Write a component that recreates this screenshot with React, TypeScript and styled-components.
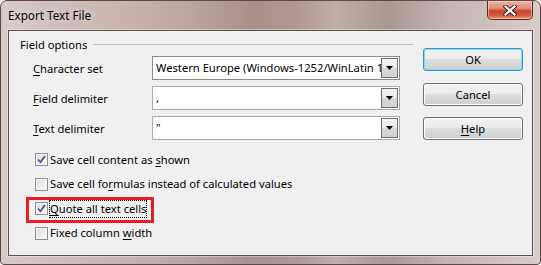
import React from "react";
import styled, { createGlobalStyle } from "styled-components";

const uiFont = `"Noto Sans", "Open Sans", "Liberation Sans", sans-serif`;

const GlobalStyle = createGlobalStyle`
  html, body {
    margin: 0;
    padding: 0;
    background: #ffffff;
  }
  body {
    font-family: ${uiFont};
  }
`;

const Window = styled.div`
  width: 541px;
  height: 265px;
  box-sizing: border-box;
  display: flex;
  flex-direction: column;
  border: 1px solid #5a4a47;
  border-radius: 7px 7px 4px 4px;
  overflow: hidden;
  background: linear-gradient(
    90deg,
    #d8cbc7 0%,
    #cfbfbb 10%,
    #cbb6b1 20%,
    #bba5a0 35%,
    #a8908b 47%,
    #b09994 55%,
    #c1ada8 62%,
    #ab9792 72%,
    #c4b2ae 82%,
    #d9cdc9 100%
  );
  font-family: ${uiFont};
  font-size: 11.2px;
  color: #000;
`;

const TitleBar = styled.div`
  height: 29px;
  flex: none;
  display: flex;
  justify-content: space-between;
  align-items: flex-start;
`;

const Title = styled.div`
  padding: 6px 0 0 7px;
  font-size: 11.7px;
  color: #000;
  text-shadow: 0 0 6px rgba(255, 255, 255, 0.8);
`;

const CloseButton = styled.div`
  width: 46px;
  height: 19px;
  margin-right: 7px;
  box-sizing: border-box;
  border: 1px solid #5a2c24;
  border-top: none;
  border-radius: 0 0 5px 5px;
  background: linear-gradient(
    180deg,
    #eeb3a2 0%,
    #e08d76 40%,
    #c9472c 55%,
    #d4593a 80%,
    #e9977a 100%
  );
  box-shadow: inset 0 0 0 1px rgba(255, 225, 215, 0.5);
  display: flex;
  align-items: center;
  justify-content: center;
`;

const Client = styled.div`
  flex: 1;
  margin: 0 7px 8px 7px;
  border: 1px solid #5e5250;
  background: #f0f0f0;
  display: flex;
  padding: 5px 9px 0 11px;
  box-shadow: 0 0 0 1px rgba(255, 255, 255, 0.35);
`;

const OptionsColumn = styled.div`
  width: 393px;
  display: flex;
  flex-direction: column;
`;

const GroupHeader = styled.div`
  height: 16px;
  display: flex;
  align-items: center;
  gap: 6px;
`;

const GroupLine = styled.div`
  flex: 1;
  height: 1px;
  background: #c2c2c2;
  margin-top: 1px;
`;

const FieldList = styled.div`
  display: flex;
  flex-direction: column;
  gap: 6px;
  margin-top: 4px;
  padding-left: 13px;
`;

const FieldRow = styled.div`
  display: flex;
  align-items: center;
  height: 24px;
`;

const FieldLabel = styled.div`
  width: 119px;
  flex: none;
`;

const Combo = styled.div<{ $dark?: boolean }>`
  width: 248px;
  height: 24px;
  box-sizing: border-box;
  border: 1px solid ${(p) => (p.$dark ? "#8a8a8a" : "#a9a9a9")};
  background: #fff;
  display: flex;
  align-items: stretch;
  padding: 1px;
`;

const ComboText = styled.div`
  flex: 1;
  min-width: 0;
  overflow: hidden;
  white-space: nowrap;
  padding-left: 2px;
  line-height: 20px;
`;

const ComboButton = styled.div`
  width: 17px;
  flex: none;
  box-sizing: border-box;
  border: 1px solid #6f6f6f;
  background: linear-gradient(180deg, #f4f4f4 0%, #e9e9e9 50%, #d9d9d9 51%, #d0d0d0 100%);
  display: flex;
  align-items: center;
  justify-content: center;
`;

const CheckList = styled.div`
  display: flex;
  flex-direction: column;
  margin-top: 7.5px;
`;

const CheckRow = styled.div`
  position: relative;
  height: 24.5px;
  display: flex;
  align-items: center;
  gap: 1px;
  padding-left: 15px;
`;

const Box = styled.div`
  width: 13px;
  height: 13px;
  box-sizing: border-box;
  border: 1px solid #8f8f8f;
  background: linear-gradient(135deg, #dcdcdc 0%, #f0f0f0 60%, #fbfbfb 100%);
  box-shadow: inset 0 0 0 1px #f4f4f4;
  display: flex;
  align-items: center;
  justify-content: center;
`;

const CheckLabel = styled.span<{ $focus?: boolean }>`
  border: 1px dotted ${(p) => (p.$focus ? "#000" : "transparent")};
  padding: 0;
  line-height: 16px;
  white-space: nowrap;
`;

const Highlight = styled.div`
  position: absolute;
  left: 6px;
  top: 0;
  width: 128px;
  height: 26px;
  box-sizing: border-box;
  border: 3px solid #ec1c24;
  pointer-events: none;
`;

const ButtonColumn = styled.div`
  width: 100px;
  margin-left: 10px;
  padding-top: 12px;
  display: flex;
  flex-direction: column;
  gap: 11.5px;
`;

const PushButton = styled.div<{ $default?: boolean }>`
  height: 23px;
  box-sizing: border-box;
  border: 1px solid ${(p) => (p.$default ? "#3c8fd0" : "#707070")};
  border-radius: 3px;
  background: linear-gradient(180deg, #f2f2f2 0%, #ebebeb 49%, #dddddd 50%, #cfcfcf 100%);
  box-shadow: inset 0 0 0 1px ${(p) => (p.$default ? "#7fdcf8" : "#fcfcfc")};
  display: flex;
  align-items: center;
  justify-content: center;
`;

const U = styled.span`
  text-decoration: underline;
  text-underline-offset: 2px;
`;

const Arrow = () => (
  <svg width="7" height="4" viewBox="0 0 7 4">
    <path d="M0 0h7L3.5 4z" fill="#000" />
  </svg>
);

const Tick = () => (
  <svg width="9" height="9" viewBox="0 0 9 9">
    <path d="M1 4.5L3.4 7.2L8 1" fill="none" stroke="#3c4f8f" strokeWidth="1.7" />
  </svg>
);

const CloseGlyph = () => (
  <svg width="14" height="11" viewBox="0 0 14 11">
    <path d="M2.5 1.5L11.5 9.5M11.5 1.5L2.5 9.5" stroke="#3a2420" strokeWidth="4.2" strokeLinecap="square" />
    <path d="M2.5 1.5L11.5 9.5M11.5 1.5L2.5 9.5" stroke="#ffffff" strokeWidth="2.2" strokeLinecap="square" />
  </svg>
);

const fields: { label: React.ReactNode; value: string; dark?: boolean }[] = [
  { label: <><U>C</U>haracter set</>, value: "Western Europe (Windows-1252/WinLatin 1)", dark: true },
  { label: <><U>F</U>ield delimiter</>, value: "," },
  { label: <><U>T</U>ext delimiter</>, value: '"' },
];

const checks: { label: React.ReactNode; checked: boolean; focus?: boolean }[] = [
  { label: <>Save cell content as <U>s</U>hown</>, checked: true },
  { label: <>Save cell fo<U>r</U>mulas instead of calculated values</>, checked: false },
  { label: <><U>Q</U>uote all text cells</>, checked: true, focus: true },
  { label: <>Fixed column <U>w</U>idth</>, checked: false },
];

export default function App() {
  return (
    <>
      <GlobalStyle />
      <Window>
        <TitleBar>
          <Title>Export Text File</Title>
          <CloseButton>
            <CloseGlyph />
          </CloseButton>
        </TitleBar>
        <Client>
          <OptionsColumn>
            <GroupHeader>
              <span>Field options</span>
              <GroupLine />
            </GroupHeader>
            <FieldList>
              {fields.map((f, i) => (
                <FieldRow key={i}>
                  <FieldLabel>{f.label}</FieldLabel>
                  <Combo $dark={f.dark}>
                    <ComboText>{f.value}</ComboText>
                    <ComboButton>
                      <Arrow />
                    </ComboButton>
                  </Combo>
                </FieldRow>
              ))}
            </FieldList>
            <CheckList>
              {checks.map((c, i) => (
                <CheckRow key={i}>
                  <Box>{c.checked && <Tick />}</Box>
                  <CheckLabel $focus={c.focus}>{c.label}</CheckLabel>
                  {c.focus && <Highlight />}
                </CheckRow>
              ))}
            </CheckList>
          </OptionsColumn>
          <ButtonColumn>
            <PushButton $default>OK</PushButton>
            <PushButton>Cancel</PushButton>
            <PushButton>
              <span>
                <U>H</U>elp
              </span>
            </PushButton>
          </ButtonColumn>
        </Client>
      </Window>
    </>
  );
}
